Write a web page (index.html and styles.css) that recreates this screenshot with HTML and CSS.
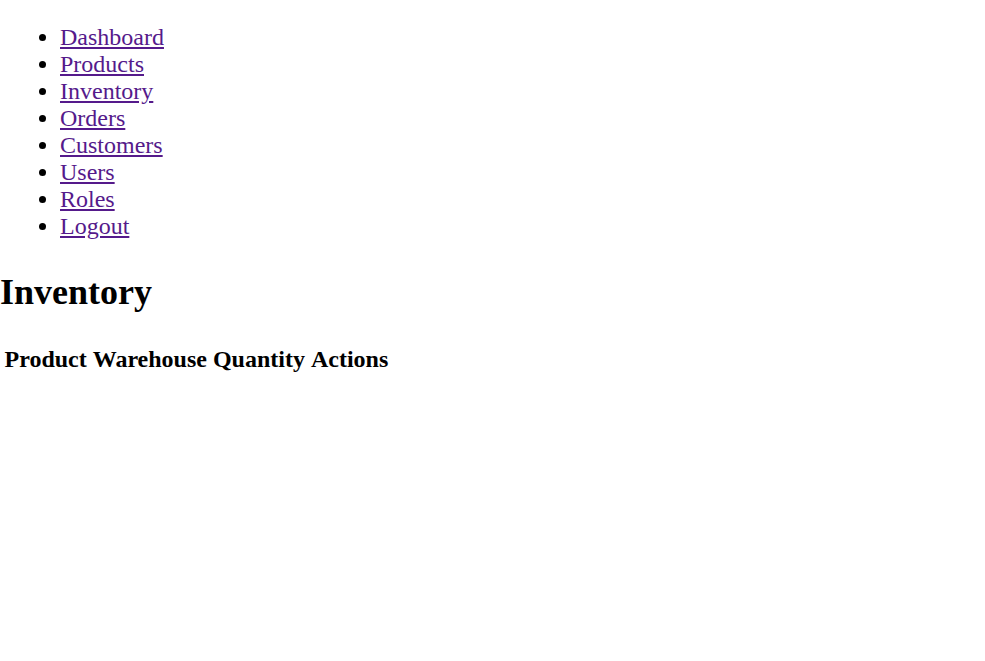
FILE: index.html
```html
<!DOCTYPE html>
<html lang="en">
<head>
<meta charset="utf-8">
<title>Inventory</title>
<link rel="stylesheet" href="styles.css">
</head>
<body>
<nav class="nav">
  <ul class="nav-list">
    <li><a class="nav-link" href="#">Dashboard</a></li>
    <li><a class="nav-link" href="#">Products</a></li>
    <li><a class="nav-link" href="#">Inventory</a></li>
    <li><a class="nav-link" href="#">Orders</a></li>
    <li><a class="nav-link" href="#">Customers</a></li>
    <li><a class="nav-link" href="#">Users</a></li>
    <li><a class="nav-link" href="#">Roles</a></li>
    <li><a class="nav-link" href="#">Logout</a></li>
  </ul>
</nav>
<main class="main">
  <h1 class="title">Inventory</h1>
  <table class="table">
    <thead>
      <tr>
        <th class="th">Product</th>
        <th class="th">Warehouse</th>
        <th class="th">Quantity</th>
        <th class="th">Actions</th>
      </tr>
    </thead>
    <tbody></tbody>
  </table>
</main>
</body>
</html>
```
FILE: styles.css
```css
html, body {
  margin: 0;
  padding: 0;
  background: #fff;
}
body {
  font-family: "Liberation Serif", "Times New Roman", serif;
  font-size: 24px;
  color: #000;
}
.nav-list {
  margin: 24px 0;
  padding-left: 60px;
  list-style: disc;
}
.nav-list li {
  line-height: 27px;
}
.nav-link {
  color: #551a8b;
  text-decoration: underline;
}
.title {
  font-size: 36px;
  font-weight: bold;
  line-height: 41px;
  margin: 32px 0 28px;
}
.table {
  border-collapse: separate;
  border-spacing: 3px;
}
.th {
  padding: 1.5px;
  font-weight: bold;
  line-height: 27px;
  text-align: center;
}
```
